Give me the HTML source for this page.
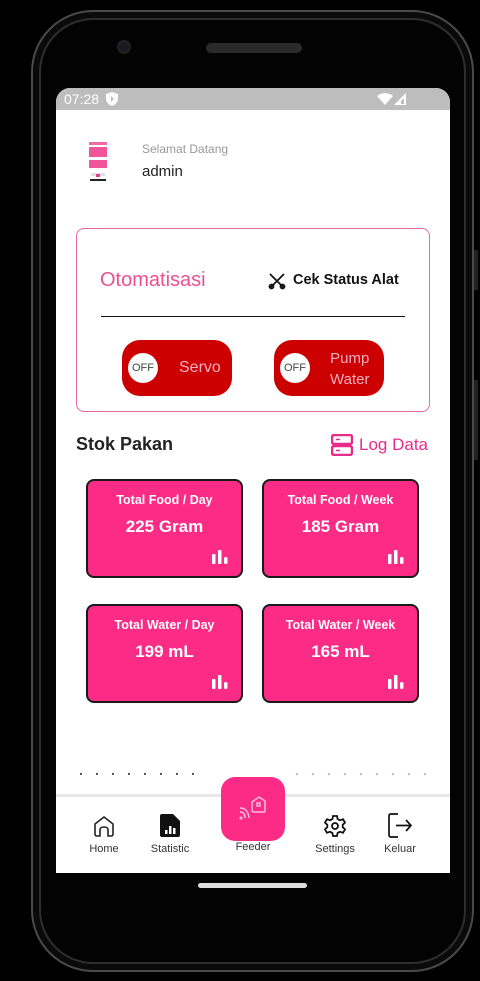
<!DOCTYPE html>
<html><head><meta charset="utf-8">
<style>
*{margin:0;padding:0;box-sizing:border-box}
body{width:480px;height:981px;background:#000;position:relative;overflow:hidden;font-family:"Liberation Sans",sans-serif}
.abs{position:absolute}
.phone{left:31px;top:10px;width:443px;height:962px;border-radius:62px;border:2px solid #4a4a4a;background:#030303;box-shadow:inset 0 0 0 6px #0a0a0a,inset 0 0 0 8px #2e2e2e}
.screen{left:56px;top:88px;width:394px;height:785px;background:#fff;border-radius:14px 14px 0 0;overflow:hidden}
.status{left:0;top:0;width:394px;height:22px;background:#bdbdbd;color:#fff;font-size:14px}
.card{width:157px;height:99px;background:#fb2b86;border:2px solid #1a1a1a;border-radius:8px;color:#fff;text-align:center;font-weight:bold}
.card .t{position:absolute;top:12px;left:0;right:0;font-size:12.5px}
.card .v{position:absolute;top:36px;left:0;right:0;font-size:17px}
.card svg{position:absolute;right:13px;bottom:12px}
.tog{width:110px;height:56px;background:#cc0000;border-radius:18px}
.knob{position:absolute;left:6px;top:13px;width:30px;height:30px;border-radius:50%;background:#fff;color:#444;font-size:11px;text-align:center;line-height:30px}
.nav{font-size:11px;color:#333;text-align:center;width:60px}
</style></head><body>
<div class="abs phone"></div>
<div class="abs" style="left:117px;top:40px;width:14px;height:14px;border-radius:50%;background:#1a1a22;border:2px solid #222"></div>
<div class="abs" style="left:206px;top:43px;width:96px;height:10px;border-radius:5px;background:#2a2a2a"></div>
<div class="abs" style="left:474px;top:250px;width:4px;height:40px;background:#222"></div>
<div class="abs" style="left:474px;top:380px;width:4px;height:80px;background:#222"></div>
<div class="abs" style="left:198px;top:883px;width:109px;height:5px;border-radius:3px;background:#ddd"></div>

<div class="abs screen">
  <div class="abs status">
    <span class="abs" style="left:8px;top:3px">07:28</span>
    <svg class="abs" style="left:50px;top:4px" width="12" height="14" viewBox="0 0 12 14"><path d="M6 0L12 2V7C12 10 9 13 6 14C3 13 0 10 0 7V2Z" fill="#fff"/><path d="M5 4L8 7L5 10Z" fill="#bdbdbd"/></svg>
    <svg class="abs" style="left:321px;top:5px" width="16" height="12" viewBox="0 0 16 12"><path d="M0 3Q8 -3 16 3L8 12Z" fill="#fff"/></svg>
    <svg class="abs" style="left:338px;top:5px" width="12" height="12" viewBox="0 0 12 12"><path d="M12 0V12H0Z" fill="#fff"/><path d="M10 5V11H7V8Z" fill="#bdbdbd"/></svg>
  </div>
  <div class="abs" style="left:32px;top:52px;width:20px;height:42px">
    <div class="abs" style="left:1px;top:2px;width:18px;height:3px;background:#f06aa8"></div>
    <div class="abs" style="left:1px;top:7px;width:18px;height:10px;background:#f0559a"></div>
    <div class="abs" style="left:1px;top:20px;width:18px;height:8px;background:#f0559a"></div>
    <div class="abs" style="left:3px;top:33px;width:14px;height:3px;background:#e0e0e0"></div>
    <div class="abs" style="left:8px;top:34px;width:4px;height:3px;background:#e23c8a"></div>
    <div class="abs" style="left:2px;top:39px;width:16px;height:2px;background:#222"></div>
  </div>
  <div class="abs" style="left:86px;top:54px;font-size:12px;color:#999">Selamat Datang</div>
  <div class="abs" style="left:86px;top:75px;font-size:15px;color:#222">admin</div>

  <div class="abs" style="left:20px;top:140px;width:354px;height:184px;border:1px solid #e56aa3;border-radius:8px"></div>
  <div class="abs" style="left:44px;top:181px;font-size:20px;color:#ec4f92">Otomatisasi</div>
  <svg class="abs" style="left:212px;top:184px" width="18" height="18" viewBox="0 0 18 18" fill="none" stroke="#111" stroke-width="1.8"><path d="M2 2L16 16M16 2L2 16"/><circle cx="3.5" cy="14.5" r="2"/><circle cx="14.5" cy="14.5" r="2"/></svg>
  <div class="abs" style="left:237px;top:184px;font-size:14.5px;font-weight:bold;color:#111">Cek Status Alat</div>
  <div class="abs" style="left:45px;top:228px;width:304px;height:1px;background:#111"></div>
  <div class="abs tog" style="left:66px;top:252px"><div class="knob">OFF</div><span class="abs" style="left:57px;top:19px;color:#f3b0c2;font-size:16px">Servo</span></div>
  <div class="abs tog" style="left:218px;top:252px"><div class="knob">OFF</div><span class="abs" style="left:56px;top:8px;color:#f3b0c2;font-size:15px;line-height:21px;text-align:center">Pump<br>Water</span></div>

  <div class="abs" style="left:20px;top:346px;font-size:18px;font-weight:bold;color:#222">Stok Pakan</div>
  <svg class="abs" style="left:275px;top:346px" width="22" height="22" viewBox="0 0 22 22"><rect x="1" y="1" width="20" height="9" rx="2" fill="none" stroke="#ea2a8a" stroke-width="2.4"/><rect x="1" y="12" width="20" height="9" rx="2" fill="none" stroke="#ea2a8a" stroke-width="2.4"/><path d="M5 5.5H9M5 16.5H9" stroke="#ea2a8a" stroke-width="1.5"/></svg>
  <div class="abs" style="left:303px;top:347px;font-size:17px;color:#ea2a8a">Log Data</div>

  <div class="abs card" style="left:30px;top:391px"><div class="t">Total Food / Day</div><div class="v">225 Gram</div><svg width="16" height="16" viewBox="0 0 16 16" fill="#fff"><rect x="0" y="6" width="3.5" height="10" rx="1"/><rect x="6" y="2" width="3.5" height="14" rx="1"/><rect x="12" y="9" width="3.5" height="7" rx="1.5"/></svg></div>
  <div class="abs card" style="left:206px;top:391px"><div class="t">Total Food / Week</div><div class="v">185 Gram</div><svg width="16" height="16" viewBox="0 0 16 16" fill="#fff"><rect x="0" y="6" width="3.5" height="10" rx="1"/><rect x="6" y="2" width="3.5" height="14" rx="1"/><rect x="12" y="9" width="3.5" height="7" rx="1.5"/></svg></div>
  <div class="abs card" style="left:30px;top:516px"><div class="t">Total Water / Day</div><div class="v">199 mL</div><svg width="16" height="16" viewBox="0 0 16 16" fill="#fff"><rect x="0" y="6" width="3.5" height="10" rx="1"/><rect x="6" y="2" width="3.5" height="14" rx="1"/><rect x="12" y="9" width="3.5" height="7" rx="1.5"/></svg></div>
  <div class="abs card" style="left:206px;top:516px"><div class="t">Total Water / Week</div><div class="v">165 mL</div><svg width="16" height="16" viewBox="0 0 16 16" fill="#fff"><rect x="0" y="6" width="3.5" height="10" rx="1"/><rect x="6" y="2" width="3.5" height="14" rx="1"/><rect x="12" y="9" width="3.5" height="7" rx="1.5"/></svg></div>

  <div class="abs" style="left:24px;top:685px;width:120px;height:2px;background:repeating-linear-gradient(90deg,#555 0 2px,transparent 2px 16px)"></div>
  <div class="abs" style="left:240px;top:685px;width:134px;height:2px;background:repeating-linear-gradient(90deg,#eaa 0 2px,transparent 2px 16px)"></div>

  <div class="abs" style="left:0;top:706px;width:394px;height:79px;background:#fff;border-top:3px solid #e8e8e8"></div>
  <svg class="abs" style="left:37px;top:727px" width="22" height="22" viewBox="0 0 22 22" fill="none" stroke="#222" stroke-width="1.6"><path d="M2 9L11 2L20 9V19Q20 21 18 21H15V15Q15 12 11 12Q7 12 7 15V21H4Q2 21 2 19Z"/></svg>
  <div class="abs nav" style="left:18px;top:755px">Home</div>
  <svg class="abs" style="left:104px;top:726px" width="20" height="23" viewBox="0 0 20 23"><path d="M2 0H13L20 7V21Q20 23 18 23H2Q0 23 0 21V2Q0 0 2 0Z" fill="#111"/><rect x="5" y="16" width="2.5" height="4" fill="#fff"/><rect x="9" y="12" width="2.5" height="8" fill="#fff"/><rect x="13" y="14" width="2.5" height="6" fill="#fff"/></svg>
  <div class="abs nav" style="left:84px;top:755px">Statistic</div>
  <div class="abs" style="left:165px;top:689px;width:64px;height:64px;border-radius:14px;background:#fb2b86"></div>
  <svg class="abs" style="left:181px;top:704px" width="32" height="32" viewBox="0 0 32 32" fill="none" stroke="#fbd" stroke-width="1.5"><path d="M15 10L22 5L28 9V19Q28 20 27 20H17Q15 20 15 18Z"/><rect x="20" y="11" width="3" height="3"/><path d="M3 16Q11 16 12 26M3 20Q8 20 8 26"/><circle cx="4" cy="26" r="0.8" fill="#fbd"/></svg>
  <div class="abs nav" style="left:167px;top:753px">Feeder</div>
  <svg class="abs" style="left:267px;top:726px" width="24" height="24" viewBox="0 0 24 24" fill="none" stroke="#111" stroke-width="1.8"><path d="M10 2H14L14.6 5 17 6.3 20 5.2 22 8.6 19.7 10.8V13.2L22 15.4 20 18.8 17 17.7 14.6 19 14 22H10L9.4 19 7 17.7 4 18.8 2 15.4 4.3 13.2V10.8L2 8.6 4 5.2 7 6.3 9.4 5Z"/><circle cx="12" cy="12" r="3"/></svg>
  <div class="abs nav" style="left:249px;top:755px">Settings</div>
  <svg class="abs" style="left:332px;top:725px" width="24" height="25" viewBox="0 0 24 25" fill="none" stroke="#111" stroke-width="1.7"><path d="M10 1H3Q1 1 1 3V22Q1 24 3 24H10M8 12.5H23M18 7L23 12.5 18 18"/></svg>
  <div class="abs nav" style="left:314px;top:755px">Keluar</div>
</div>
</body></html>
